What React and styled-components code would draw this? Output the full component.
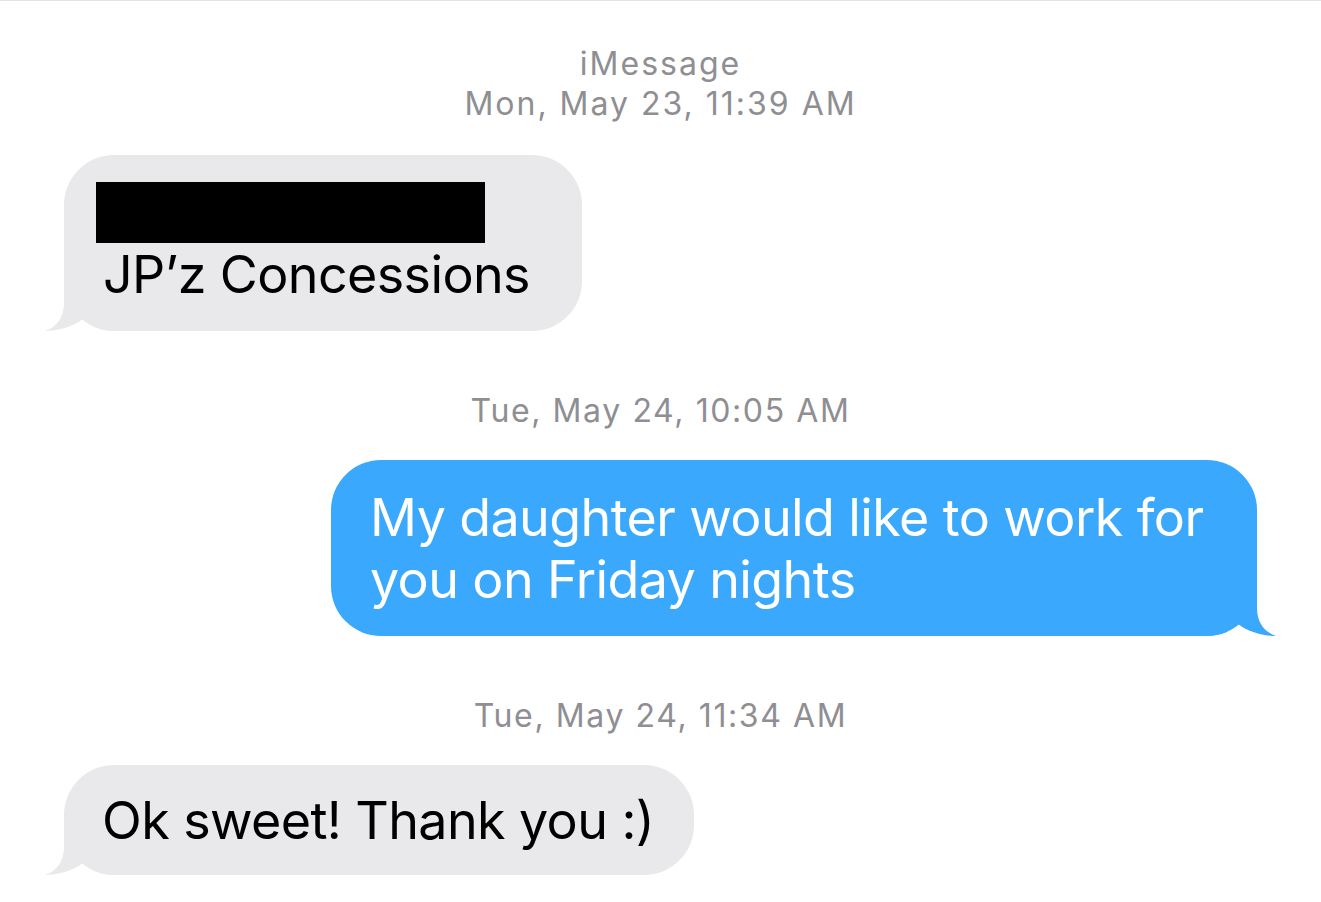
import styled, { createGlobalStyle } from "styled-components";

const GlobalStyle = createGlobalStyle`
  html, body {
    margin: 0;
    padding: 0;
    background: #ffffff;
  }
  body {
    font-family: Inter, "Noto Sans", sans-serif;
    -webkit-font-smoothing: antialiased;
  }
`;

const Screen = styled.main`
  width: 1321px;
  height: 902px;
  box-sizing: border-box;
  border-top: 1px solid #e3e3e3;
  padding: 43px 64px 0;
  display: flex;
  flex-direction: column;
  overflow: hidden;
`;

const Stamp = styled.div`
  font-size: 32px;
  line-height: 40px;
  color: #8e8e93;
  text-align: center;
  letter-spacing: ${(p) => (p.$first ? "2px" : "1.6px")};
  margin: ${(p) => (p.$first ? "0 0 31px" : "60px 0 29px")};
`;

const Row = styled.div`
  display: flex;
  justify-content: ${(p) => (p.$out ? "flex-end" : "flex-start")};
`;

const Bubble = styled.div`
  position: relative;
  isolation: isolate;
  box-sizing: border-box;
  width: ${(p) => p.$width}px;
  padding: ${(p) => (p.$single ? "25px 20px 23px 38px" : "27px 20px 25px 39px")};
  border-radius: 50px;
  background: ${(p) => (p.$out ? "#3aa8fc" : "#e9e9eb")};
  color: ${(p) => (p.$out ? "#ffffff" : "#000000")};
  font-size: 52px;
  line-height: 62px;
  letter-spacing: -0.6px;
`;

const Tail = styled.svg`
  position: absolute;
  bottom: 0;
  ${(p) => (p.$out ? "right: -19px; transform: scaleX(-1);" : "left: -19px;")}
  width: 70px;
  height: 50px;
  z-index: -1;
  fill: ${(p) => (p.$out ? "#3aa8fc" : "#e9e9eb")};
`;

const Redacted = styled.div`
  width: 389px;
  height: 61px;
  margin: 0 0 1px -7px;
  background: #000000;
`;

function BubbleTail({ out }) {
  return (
    <Tail $out={out} viewBox="0 0 70 50" aria-hidden="true">
      <path d="M19 0 L19 22 C19 36 12 46 0 50 C12 50 28 46 38 38 C46 45 56 50 70 50 L70 0 Z" />
    </Tail>
  );
}

function Message({ out, width, single, children }) {
  return (
    <Row $out={out}>
      <Bubble $out={out} $width={width} $single={single}>
        {children}
        <BubbleTail out={out} />
      </Bubble>
    </Row>
  );
}

export default function App() {
  return (
    <>
      <GlobalStyle />
      <Screen>
        <Stamp $first>
          iMessage
          <br />
          Mon, May 23, 11:39 AM
        </Stamp>
        <Message width={518}>
          <Redacted />
          JP’z Concessions
        </Message>
        <Stamp>Tue, May 24, 10:05 AM</Stamp>
        <Message out width={926}>
          My daughter would like to work for you on Friday nights
        </Message>
        <Stamp>Tue, May 24, 11:34 AM</Stamp>
        <Message width={630} single>
          Ok sweet! Thank you :)
        </Message>
      </Screen>
    </>
  );
}
